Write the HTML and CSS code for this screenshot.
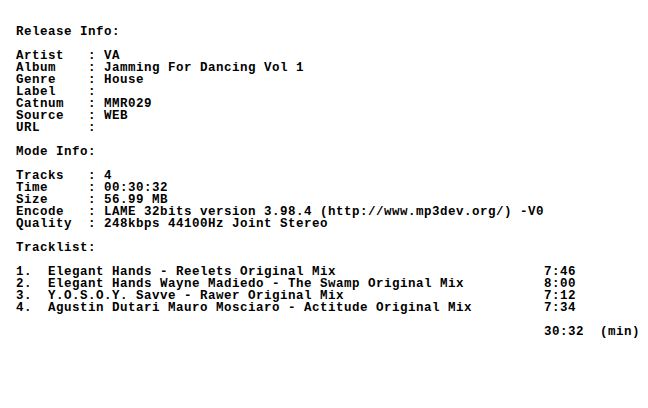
FILE: index.html
```html
<!DOCTYPE html>
<html>
<head>
<meta charset="utf-8">
<link rel="stylesheet" href="styles.css">
</head>
<body>
<pre class="nfo">Release Info:

Artist   : VA
Album    : Jamming For Dancing Vol 1
Genre    : House
Label    :
Catnum   : MMR029
Source   : WEB
URL      :

Mode Info:

Tracks   : 4
Time     : 00:30:32
Size     : 56.99 MB
Encode   : LAME 32bits version 3.98.4 (http://www.mp3dev.org/) -V0
Quality  : 248kbps 44100Hz Joint Stereo

Tracklist:

1.  Elegant Hands - Reelets Original Mix                          7:46
2.  Elegant Hands Wayne Madiedo - The Swamp Original Mix          8:00
3.  Y.O.S.O.Y. Savve - Rawer Original Mix                         7:12
4.  Agustin Dutari Mauro Mosciaro - Actitude Original Mix         7:34

                                                                  30:32  (min)</pre>
</body>
</html>
```
FILE: styles.css
```css
html, body {
  margin: 0;
  padding: 0;
  background: #ffffff;
}
.nfo {
  margin: 0;
  padding: 26px 0 0 16px;
  font-family: "Liberation Mono", monospace;
  font-weight: bold;
  font-size: 12.5px;
  letter-spacing: 0.5px;
  line-height: 12px;
  color: #000000;
}
```
